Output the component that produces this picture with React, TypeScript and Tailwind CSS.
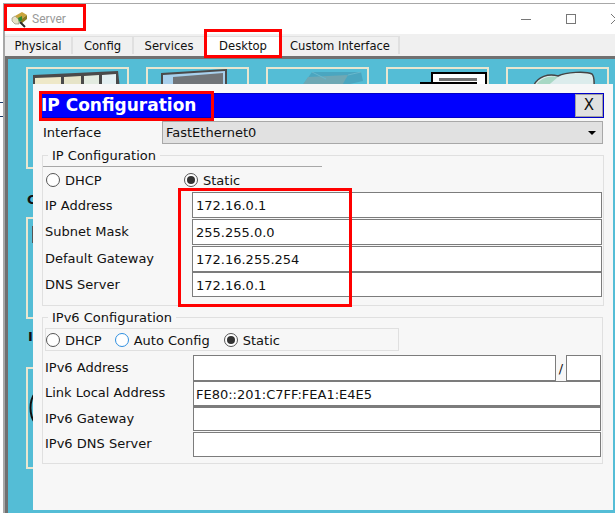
const tabs = [
  { label: "Physical", width: "w-[68px]" },
  { label: "Config", width: "w-[61px]" },
  { label: "Services", width: "w-[72px]" },
  { label: "Desktop", width: "w-[76px]" },
  { label: "Custom Interface", width: "w-[118px]" },
];

const Radio = ({ label, checked, blue }: { label: string; checked?: boolean; blue?: boolean }) => (
  <div className="flex items-center gap-[5px]">
    <span
      className={`flex h-[14px] w-[14px] items-center justify-center rounded-full border bg-white ${
        blue ? "border-[#2f8fe0]" : "border-[#555555]"
      }`}
    >
      {checked && <span className="h-[8px] w-[8px] rounded-full bg-[#333333]" />}
    </span>
    <span>{label}</span>
  </div>
);

const Field = ({
  label,
  value,
  className,
  labelClassName = "w-[148px] pb-[2px]",
  inputClassName = "pl-[2px]",
}: {
  label: string;
  value?: string;
  className: string;
  labelClassName?: string;
  inputClassName?: string;
}) => (
  <div className={`flex items-center ${className}`}>
    <span className={`shrink-0 ${labelClassName}`}>{label}</span>
    <div className={`flex h-full flex-1 items-center border border-[#7c7c7c] bg-white ${inputClassName}`}>
      {value}
    </div>
  </div>
);

const IconBox = ({ children }: { children?: React.ReactNode }) => (
  <div className="h-[102px] w-[103px] shrink-0 border-2 border-[#e8e6d0]">{children}</div>
);

const Mark = ({ className }: { className: string }) => (
  <div className={`pointer-events-none absolute border-[3px] border-[#ff0000] ${className}`} />
);

const ServerIcon = () => (
  <svg width="17" height="17" viewBox="0 0 17 17">
    <path d="M1 7 L4 5 L8 9 L8 13 L4 13 L1 10 Z" fill="#e6e2c6" stroke="#6b6b50" strokeWidth="0.5" />
    <path d="M4 5 L11 1 L16 4 L9 9 Z" fill="#c9a43c" />
    <path d="M9 9 L16 4 L16 8 L10 13 Z" fill="#8a7a22" />
    <path d="M7 7 L11 5 L11 9 L8 11 Z" fill="#2f8a2f" />
    <path d="M9 11 L14 16" stroke="#2b2b2b" strokeWidth="2" />
  </svg>
);

const ip = "pl-[3px] pt-px";

export default function App() {
  return (
    <div className="relative h-[513px] w-[615px] overflow-hidden bg-white font-['DejaVu_Sans',sans-serif] text-[13px] leading-none text-[#111111]">
      {/* bits of the page behind the window */}
      <div className="absolute left-0 top-[102px] h-px w-[3px] bg-[#1a3a6a]" />
      <div className="absolute left-0 top-[116px] h-px w-[3px] bg-[#1a3a6a]" />

      <div className="ml-[3px] mt-[3px] flex h-[510px] flex-col border-l-2 border-t border-[#a8a8a8]">
        {/* title bar */}
        <div className="flex h-[30px] shrink-0 items-center bg-white pl-[6px]">
          <ServerIcon />
          <span className="ml-[4px] font-['Roboto',sans-serif] text-[12px] text-[#999999]">Server</span>
          <div className="ml-auto mr-[-6px] flex items-center">
            <span className="h-px w-[10px] bg-[#777777]" />
            <span className="ml-[35px] h-[10px] w-[10px] border border-[#777777]" />
            <svg className="ml-[35px]" width="10" height="10" viewBox="0 0 10 10">
              <path d="M0 0 L10 10 M10 0 L0 10" stroke="#777" fill="none" />
            </svg>
          </div>
        </div>
        {/* tabs */}
        <div className="flex h-[22px] shrink-0 bg-[#f0f0f0] pt-[2px]">
          {tabs.map((tab) => (
            <div
              key={tab.label}
              className={`flex items-center justify-center border-r-2 border-t border-[#e0e0e0] text-[11.6px] ${tab.width} ${
                tab.label === "Desktop" ? "h-[20px] bg-white" : "h-[18px] pt-[2px]"
              }`}
            >
              {tab.label}
            </div>
          ))}
        </div>
        {/* desktop panel */}
        <div className="relative flex-1 border-l-[3px] border-t-[3px] border-[#707070] bg-[#54bdd6] pl-[18px] pt-[8px]">
          <div className="flex gap-[17px]">
            <IconBox>
              <svg width="99" height="20" viewBox="0 0 99 20">
                <path d="M5 6 L90 2 L92 20 L5 20 Z" fill="#4a4a4a" />
                <path d="M7 9 L33 8 L33 20 L7 20 Z" fill="#eee8c8" />
                <path d="M36 8 L53 7 L53 20 L36 20 Z" fill="#e6e4c8" />
                <path d="M56 7 L71 6 L71 20 L56 20 Z" fill="#e2ebe0" />
                <path d="M74 6 L88 5 L88 20 L74 20 Z" fill="#e4f0f2" />
              </svg>
            </IconBox>
            <IconBox>
              <svg width="99" height="20" viewBox="0 0 99 20">
                <path d="M13 4 L79 0 L79 20 L13 20 Z" fill="#4a4a4a" />
                <path d="M15 6 L77 2 L77 20 L15 20 Z" fill="#a8d0ec" />
                <path d="M25 8 L75 4 L75 20 L25 20 Z" fill="#707478" />
              </svg>
            </IconBox>
            <IconBox>
              <svg width="99" height="20" viewBox="0 0 99 20">
                <path d="M44 3 L93 3 L95 12 L60 20 L32 20 Z" fill="#4aa6c0" />
                <path d="M40 8 L80 6 L72 20 L32 20 Z" fill="#6fa8b4" />
                <path d="M44 3 L58 10 M93 3 L80 6" stroke="#68b8cc" fill="none" />
              </svg>
            </IconBox>
            <IconBox>
              <svg width="99" height="20" viewBox="0 0 99 20">
                <rect x="44" y="4" width="54" height="16" fill="#fff" stroke="#000" strokeWidth="2" />
                <rect x="51" y="9" width="38" height="3" fill="#707070" />
                <rect x="33" y="14" width="55" height="8" fill="#505050" stroke="#000" strokeWidth="2" />
              </svg>
            </IconBox>
            <IconBox>
              <svg width="99" height="20" viewBox="0 0 99 20">
                <path
                  d="M26 16 C30 8 40 4 50 7 C58 3 78 2 84 5 C87 8 86 13 86 20 L24 20 Z"
                  fill="#dcecec"
                  stroke="#444"
                  strokeWidth="1.5"
                />
                <path d="M28 16 C32 9 42 6 50 8 L36 20 L26 20 Z" fill="#a8d8c4" />
              </svg>
            </IconBox>
          </div>
          <div className="ml-px mt-[24px] h-[18px] font-bold text-[#111111]">C</div>
          <div className="mt-[6px]">
            <IconBox>
              <div className="ml-[4px] mt-[7px] h-[17px] w-[2px] bg-[#555555]" />
            </IconBox>
          </div>
          <div className="ml-[2px] mt-[11px] h-[18px] font-bold text-[#111111]">I</div>
          <div className="mt-[19px]">
            <IconBox>
              <svg width="12" height="60" viewBox="0 0 12 60" className="mt-[22px]">
                <path d="M7 2 C1 10 1 24 7 32" stroke="#111" strokeWidth="2" fill="none" />
              </svg>
            </IconBox>
          </div>

          {/* dialog */}
          <div className="absolute bottom-[3px] left-[25px] right-[2px] top-[25px] bg-[#f7f7f7] pl-[6px] pr-[9px] pt-[9px]">
            <div className="flex h-[25px] items-center justify-between border border-[#0000c8] bg-[#0000ff] pl-px">
              <span className="text-[17px] font-bold text-white">IP Configuration</span>
              <span className="flex h-[23px] w-[28px] items-center justify-center border border-[#a0a0a0] bg-[#e1e1e1] text-[15px] text-[#111111]">
                X
              </span>
            </div>
            <div className="mt-[3px] flex h-[23px] items-center pl-[4px] pr-px">
              <span className="w-[119px] shrink-0">Interface</span>
              <div className="flex h-full flex-1 items-center justify-between border border-[#a8a8a8] bg-[#e1e1e1] pl-[3px] pr-[6px]">
                FastEthernet0
                <span className="h-0 w-0 border-x-[4px] border-t-[4px] border-x-transparent border-t-black" />
              </div>
            </div>

            <div className="relative ml-[3px] mt-[11px] h-[151px] w-[562px] border border-[#e0e0e0] pl-[2px] pr-px">
              <span className="absolute left-[5px] top-[-7px] bg-[#f7f7f7] px-[4px]">IP Configuration</span>
              <div className="absolute left-0 top-[10px] h-px w-[279px] bg-[#a8a8a8]" />
              <div className="flex h-[36px] items-end pb-[5px] pl-px">
                <div className="w-[138px]">
                  <Radio label="DHCP" />
                </div>
                <Radio label="Static" checked />
              </div>
              <Field label="IP Address" value="172.16.0.1" className="h-[26px]" labelClassName="w-[147px]" inputClassName={ip} />
              <Field label="Subnet Mask" value="255.255.0.0" className="mt-px h-[26px]" labelClassName="w-[147px] pb-px" inputClassName={ip} />
              <Field label="Default Gateway" value="172.16.255.254" className="mt-px h-[26px]" labelClassName="w-[147px] pb-[2px]" inputClassName={ip} />
              <Field label="DNS Server" value="172.16.0.1" className="h-[25px]" labelClassName="w-[147px]" inputClassName={ip} />
            </div>

            <div className="relative ml-[3px] mt-[11px] h-[147px] w-[561px] border border-[#e0e0e0] pl-[2px] pr-px">
              <span className="absolute left-[5px] top-[-7px] bg-[#f7f7f7] px-[4px]">IPv6 Configuration</span>
              <div className="mt-[10px] flex h-[23px] w-[354px] items-center gap-[13px] border border-[#e0e0e0] pt-px [&>*:last-child]:ml-px">
                <Radio label="DHCP" />
                <Radio label="Auto Config" blue />
                <Radio label="Static" checked />
              </div>
              <div className="mt-[4px] flex h-[26px] items-center">
                <span className="w-[148px] shrink-0 pb-[2px]">IPv6 Address</span>
                <div className="h-full w-[363px] border border-[#7c7c7c] bg-white" />
                <span className="w-[10px] text-center">/</span>
                <div className="h-full flex-1 border border-[#7c7c7c] bg-white" />
              </div>
              <Field
                label="Link Local Address"
                value="FE80::201:C7FF:FEA1:E4E5"
                className="h-[26px]"
                labelClassName="w-[148px] pb-[3px]"
                inputClassName="border-b-2 pl-[2px] pt-[2px]"
              />
              <Field label="IPv6 Gateway" className="h-[24px]" />
              <Field label="IPv6 DNS Server" className="mt-px h-[25px]" />
            </div>
          </div>
        </div>
      </div>

      {/* red annotation boxes */}
      <Mark className="left-[4px] top-[4px] h-[27px] w-[82px]" />
      <Mark className="left-[204px] top-[29px] h-[29px] w-[78px]" />
      <Mark className="left-[39px] top-[91px] h-[30px] w-[175px]" />
      <Mark className="left-[178px] top-[188px] h-[119px] w-[174px]" />
    </div>
  );
}
